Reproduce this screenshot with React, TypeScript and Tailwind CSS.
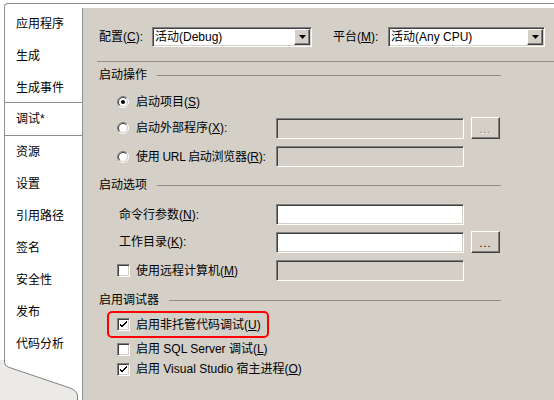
import React from "react";

const font = { fontFamily: '"Liberation Sans", "Noto Sans CJK SC", sans-serif' };

const tabs = ["应用程序", "生成", "生成事件", "调试*", "资源", "设置", "引用路径", "签名", "安全性", "发布", "代码分析"];

function Radio({ checked }: { checked?: boolean }) {
  return (
    <svg width="12" height="12" viewBox="0 0 12 12" className="shrink-0">
      <circle cx="6" cy="6" r="4.5" fill="#fff" />
      <path d="M2.1 9.9A5.5 5.5 0 0 1 9.9 2.1" fill="none" stroke="#808080" />
      <path d="M9.9 2.1A5.5 5.5 0 0 1 2.1 9.9" fill="none" stroke="#fff" />
      <path d="M2.8 9.2A4.5 4.5 0 0 1 9.2 2.8" fill="none" stroke="#404040" />
      <path d="M9.2 2.8A4.5 4.5 0 0 1 2.8 9.2" fill="none" stroke="#d4d0c8" />
      {checked && <circle cx="6" cy="6" r="2" fill="#000" />}
    </svg>
  );
}

function Check({ checked }: { checked?: boolean }) {
  return (
    <div className="box-border h-[13px] w-[13px] shrink-0 border border-b-white border-l-[#808080] border-r-white border-t-[#808080] bg-white shadow-[inset_1px_1px_0_#404040,inset_-1px_-1px_0_#d4d0c8]">
      {checked && (
        <svg width="11" height="11" viewBox="0 0 11 11" className="block">
          <path d="M2 4.5 L4 6.5 L8.5 2 L8.5 4 L4 8.5 L2 6.5 Z" fill="#000" shapeRendering="crispEdges" />
        </svg>
      )}
    </div>
  );
}

function TextBox({ disabled }: { disabled?: boolean }) {
  return (
    <div
      className={[
        "box-border h-[21px] w-[188px] shrink-0 border border-b-white border-l-[#808080] border-r-white border-t-[#808080] shadow-[inset_1px_1px_0_#404040,inset_-1px_-1px_0_#d4d0c8]",
        disabled ? "bg-[#d4d0c8]" : "bg-white",
      ].join(" ")}
    />
  );
}

function DotsButton({ disabled }: { disabled?: boolean }) {
  return (
    <div className="ml-[7px] box-border flex h-[22px] w-[29px] items-end justify-center border border-b-[#404040] border-l-white border-r-[#404040] border-t-white bg-[#d4d0c8] pb-[3px] shadow-[inset_-1px_-1px_0_#808080]">
      <span
        className={[
          "text-[11px] leading-none tracking-[1px]",
          disabled ? "text-[#808080] [text-shadow:1px_1px_0_#fff]" : "text-black",
        ].join(" ")}
      >
        ...
      </span>
    </div>
  );
}

function Dropdown({ value, width }: { value: string; width: string }) {
  return (
    <div className={`box-border flex h-[20px] items-center border border-b-white border-l-[#808080] border-r-white border-t-[#808080] bg-white pl-[2px] pr-[1px] shadow-[inset_1px_1px_0_#404040,inset_-1px_-1px_0_#d4d0c8] ${width}`}>
      <span className="flex-1 text-[12px] leading-none">{value}</span>
      <div className="box-border flex h-[16px] w-[16px] items-center justify-center border border-b-[#404040] border-l-white border-r-[#404040] border-t-white bg-[#d4d0c8] shadow-[inset_-1px_-1px_0_#808080]">
        <svg width="7" height="4" viewBox="0 0 7 4">
          <path d="M0 0H7L3.5 4Z" fill="#000" />
        </svg>
      </div>
    </div>
  );
}

function Header({ label }: { label: string }) {
  return (
    <div className="flex h-[16px] items-center pl-[2px]">
      <span className="text-[12px] leading-none">{label}</span>
      <div className="ml-[10px] flex-1 border-t border-[#8e8e8e]" />
    </div>
  );
}

export default function App() {
  return (
    <div className="flex h-[400px] w-[554px] overflow-hidden bg-white pt-[3px] text-black" style={font}>
      {/* tab strip */}
      <div className="ml-[4px] flex w-[78px] shrink-0 flex-col">
        <div className="flex flex-1 flex-col rounded-tl-[4px] border-l border-t border-[#8e8e8e] bg-white pt-[4px]">
          {tabs.map((tab) =>
            tab === "调试*" ? (
              <div key={tab} className="-mt-[2px] box-border flex h-[34px] items-center border-b border-t border-[#8e8e8e] pl-[11px] text-[12px]">
                {tab}
              </div>
            ) : (
              <div key={tab} className="flex h-[32px] items-center pl-[11px] text-[12px]">
                {tab}
              </div>
            )
          )}
        </div>
        <svg width="82" height="40" viewBox="0 0 82 40" className="-ml-[4px] block shrink-0">
          <rect width="82" height="40" fill="#fff" />
          <path d="M0 0H4.5V2Q4.5 6 8.5 7.2L70 28Q77.5 31 77.5 36V40H0Z" fill="#ebeae6" />
          <path d="M4.5 0V2Q4.5 6 8.5 7.2L70 28Q77.5 31 77.5 36V40" fill="none" stroke="#808080" />
        </svg>
      </div>

      {/* right side */}
      <div className="flex flex-1 flex-col border-t border-[#8e8e8e] pt-[4px]">
        <div className="flex flex-1 flex-col border-l border-[#8e8e8e] bg-[#d4d0c8] pt-[19px]">
          {/* configuration row */}
          <div className="flex h-[20px] items-center pl-[16px]">
            <span className="w-[53px] text-[12px] leading-none">
              配置(<u>C</u>):
            </span>
            <Dropdown value="活动(Debug)" width="w-[160px]" />
            <span className="ml-[21px] w-[55px] text-[12px] leading-none">
              平台(<u>M</u>):
            </span>
            <Dropdown value="活动(Any CPU)" width="w-[157px]" />
          </div>

          <div className="ml-[14px] mt-[14px] border-t border-[#8e8e8e]" />

          <div className="flex w-[418px] flex-col pl-[14px]">
            <div className="mt-[5px]">
              <Header label="启动操作" />
            </div>

            <div className="ml-[20px] mt-[9px] flex h-[20px] items-center">
              <Radio checked />
              <span className="ml-[7px] text-[12px] leading-none">
                启动项目(<u>S</u>)
              </span>
            </div>

            <div className="ml-[20px] mt-[5px] flex h-[22px] items-center">
              <Radio />
              <span className="ml-[7px] w-[140px] shrink-0 text-[12px] leading-none">
                启动外部程序(<u>X</u>):
              </span>
              <TextBox disabled />
              <DotsButton disabled />
            </div>

            <div className="ml-[20px] mt-[7px] flex h-[21px] items-center">
              <Radio />
              <span className="ml-[7px] w-[140px] shrink-0 whitespace-nowrap text-[12px] leading-none tracking-[-0.3px]">
                使用 URL 启动浏览器(<u>R</u>):
              </span>
              <TextBox disabled />
            </div>

            <div className="mt-[10px]">
              <Header label="启动选项" />
            </div>

            <div className="ml-[22px] mt-[11px] flex h-[21px] items-center">
              <span className="w-[157px] shrink-0 text-[12px] leading-none">
                命令行参数(<u>N</u>):
              </span>
              <TextBox />
            </div>

            <div className="ml-[22px] mt-[6px] flex h-[22px] items-center">
              <span className="w-[157px] shrink-0 text-[12px] leading-none">
                工作目录(<u>K</u>):
              </span>
              <TextBox />
              <DotsButton />
            </div>

            <div className="ml-[20px] mt-[7px] flex h-[21px] items-center">
              <Check />
              <span className="ml-[6px] w-[140px] shrink-0 text-[12px] leading-none">
                使用远程计算机(<u>M</u>)
              </span>
              <TextBox disabled />
            </div>

            <div className="mt-[11px]">
              <Header label="启用调试器" />
            </div>

            <div className="ml-[10px] mt-[3px] box-border flex h-[27px] w-[162px] items-center rounded-[5px] border-2 border-[#ff0000] pl-[8px]">
              <Check checked />
              <span className="ml-[6px] text-[12px] leading-none">
                启用非托管代码调试(<u>U</u>)
              </span>
            </div>

            <div className="ml-[20px] mt-[1px] flex h-[20px] items-center">
              <Check />
              <span className="ml-[6px] text-[12px] leading-none">
                启用 SQL Server 调试(<u>L</u>)
              </span>
            </div>

            <div className="ml-[20px] flex h-[20px] items-center">
              <Check checked />
              <span className="ml-[6px] text-[12px] leading-none">
                启用 Visual Studio 宿主进程(<u>O</u>)
              </span>
            </div>
          </div>
        </div>
      </div>
    </div>
  );
}
